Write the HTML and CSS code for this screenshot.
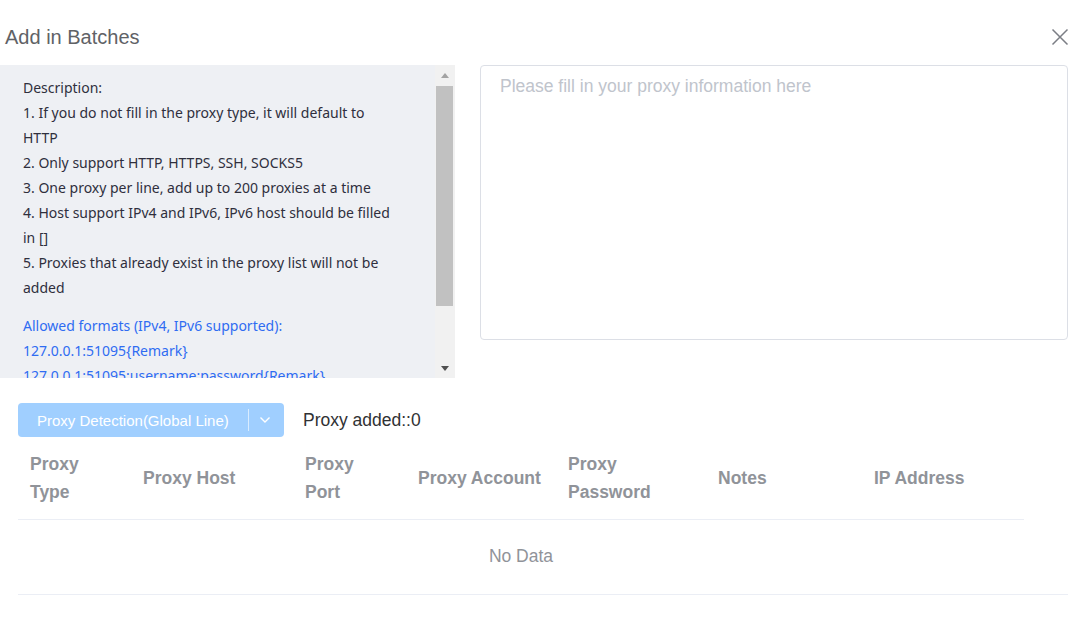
FILE: index.html
```html
<!DOCTYPE html>
<html lang="en">
<head>
<meta charset="utf-8">
<title>Add in Batches</title>
<link rel="stylesheet" href="styles.css">
</head>
<body>
<div class="dialog">
  <div class="dialog-header">
    <span class="dialog-title">Add in Batches</span>
    <button class="close-btn" aria-label="Close">
      <svg width="18" height="18" viewBox="0 0 18 18"><path d="M1.5 1.5 L16.5 16.5 M16.5 1.5 L1.5 16.5" stroke="#7b7e85" stroke-width="1.5" fill="none"/></svg>
    </button>
  </div>
  <div class="top-row">
    <div class="desc-panel">
      <div class="desc-content">
        <div class="desc-block">
          <p>Description:</p>
          <p>1. If you do not fill in the proxy type, it will default to HTTP</p>
          <p>2. Only support HTTP, HTTPS, SSH, SOCKS5</p>
          <p>3. One proxy per line, add up to 200 proxies at a time</p>
          <p>4. Host support IPv4 and IPv6, IPv6 host should be filled in []</p>
          <p>5. Proxies that already exist in the proxy list will not be added</p>
        </div>
        <div class="desc-block formats">
          <p>Allowed formats (IPv4, IPv6 supported):</p>
          <p>127.0.0.1:51095{Remark}</p>
          <p>127.0.0.1:51095:username:password{Remark}</p>
        </div>
      </div>
      <div class="scrollbar">
        <span class="arrow up"></span>
        <span class="track"><span class="thumb"></span></span>
        <span class="arrow down"></span>
      </div>
    </div>
    <textarea class="proxy-input" placeholder="Please fill in your proxy information here"></textarea>
  </div>
  <div class="action-row">
    <div class="split-btn">
      <span class="split-main">Proxy Detection(Global Line)</span>
      <span class="split-divider"></span>
      <span class="split-arrow">
        <svg width="12" height="8" viewBox="0 0 12 8"><path d="M1.5 1.5 L6 6 L10.5 1.5" stroke="#ffffff" stroke-width="1.4" fill="none"/></svg>
      </span>
    </div>
    <span class="added">Proxy added::0</span>
  </div>
  <div class="table">
    <div class="thead">
      <div class="th c1">Proxy<br>Type</div>
      <div class="th c2">Proxy Host</div>
      <div class="th c3">Proxy<br>Port</div>
      <div class="th c4">Proxy Account</div>
      <div class="th c5">Proxy<br>Password</div>
      <div class="th c6">Notes</div>
      <div class="th c7">IP Address</div>
    </div>
    <div class="tbody">
      <div class="empty">No Data</div>
    </div>
  </div>
</div>
</body>
</html>
```

FILE: styles.css
```css
* { box-sizing: border-box; }
html, body {
  margin: 0;
  padding: 0;
  background: #ffffff;
  font-family: "Liberation Sans", Arial, sans-serif;
}
.dialog {
  width: 1083px;
  height: 632px;
  overflow: hidden;
}
.dialog-header {
  height: 65px;
  display: flex;
  align-items: flex-start;
  justify-content: space-between;
  padding: 25px 14px 0 5px;
}
.dialog-title {
  font-size: 20px;
  line-height: 24px;
  color: #606266;
}
.close-btn {
  border: 0;
  background: none;
  padding: 0;
  margin-top: 3px;
  width: 18px;
  height: 18px;
  cursor: pointer;
}
.close-btn svg { display: block; }

.top-row {
  display: flex;
  gap: 25px;
  height: 313px;
}
.desc-panel {
  width: 455px;
  height: 313px;
  background: #eef0f4;
  display: flex;
}
.desc-content {
  flex: 1;
  overflow: hidden;
  padding: 10px 38px 0 23px;
  font-family: "Noto Sans", "Open Sans", sans-serif;
  font-size: 14px;
  line-height: 25px;
  color: #2f2f3d;
}
.desc-content p { margin: 0; }
.desc-block + .desc-block { margin-top: 13px; }
.formats { color: #2f6cf2; }

.scrollbar {
  width: 20px;
  background: #f1f1f1;
  display: flex;
  flex-direction: column;
  align-items: center;
  padding: 0 2px 0 1px;
}
.scrollbar .arrow {
  width: 0;
  height: 0;
  border-left: 4.5px solid transparent;
  border-right: 4.5px solid transparent;
}
.scrollbar .up {
  margin-top: 8px;
  border-bottom: 5px solid #a3a3a3;
}
.scrollbar .down {
  margin-bottom: 7px;
  border-top: 5px solid #505050;
}
.scrollbar .track {
  flex: 1;
  width: 100%;
  padding-top: 8px;
}
.scrollbar .thumb {
  display: block;
  width: 100%;
  height: 220px;
  background: #c1c1c1;
}

.proxy-input {
  width: 588px;
  height: 275px;
  border: 1px solid #dcdfe6;
  border-radius: 4px;
  padding: 9px 19px;
  font-family: "Liberation Sans", Arial, sans-serif;
  font-size: 17.5px;
  line-height: 22px;
  resize: none;
  outline: none;
  color: #606266;
}
.proxy-input::placeholder {
  color: #c0c4cc;
}

.action-row {
  display: flex;
  align-items: center;
  margin: 25px 0 0 18px;
  height: 34px;
}
.split-btn {
  display: flex;
  align-items: center;
  width: 266px;
  height: 34px;
  background: #a0cfff;
  border-radius: 4px;
  color: #ffffff;
  font-size: 15px;
}
.split-main {
  padding-left: 19px;
  width: 230px;
  white-space: nowrap;
}
.split-divider {
  width: 1px;
  height: 22px;
  background: rgba(255, 255, 255, 0.6);
}
.split-arrow {
  flex: 1;
  display: flex;
  justify-content: center;
  padding-right: 3px;
}
.split-arrow svg { display: block; }
.added {
  margin-left: 19px;
  font-size: 17.5px;
  color: #303133;
}

.table {
  margin: 10px 0 0 18px;
  width: 1050px;
  border-bottom: 1px solid #ebeef5;
}
.thead {
  display: flex;
  width: 1006px;
  height: 73px;
  border-bottom: 1px solid #ebeef5;
  align-items: center;
  padding-bottom: 10px;
}
.th {
  padding: 0 12px;
  font-size: 17.5px;
  font-weight: bold;
  line-height: 28px;
  color: #909399;
}
.c1 { width: 113px; }
.c2 { width: 162px; }
.c3 { width: 113px; }
.c4 { width: 150px; }
.c5 { width: 150px; }
.c6 { width: 156px; }
.c7 { width: 162px; }
.tbody {
  width: 1006px;
  height: 74px;
  display: flex;
  align-items: center;
  justify-content: center;
}
.empty {
  font-size: 17.5px;
  color: #909399;
  padding-bottom: 1px;
}
```
